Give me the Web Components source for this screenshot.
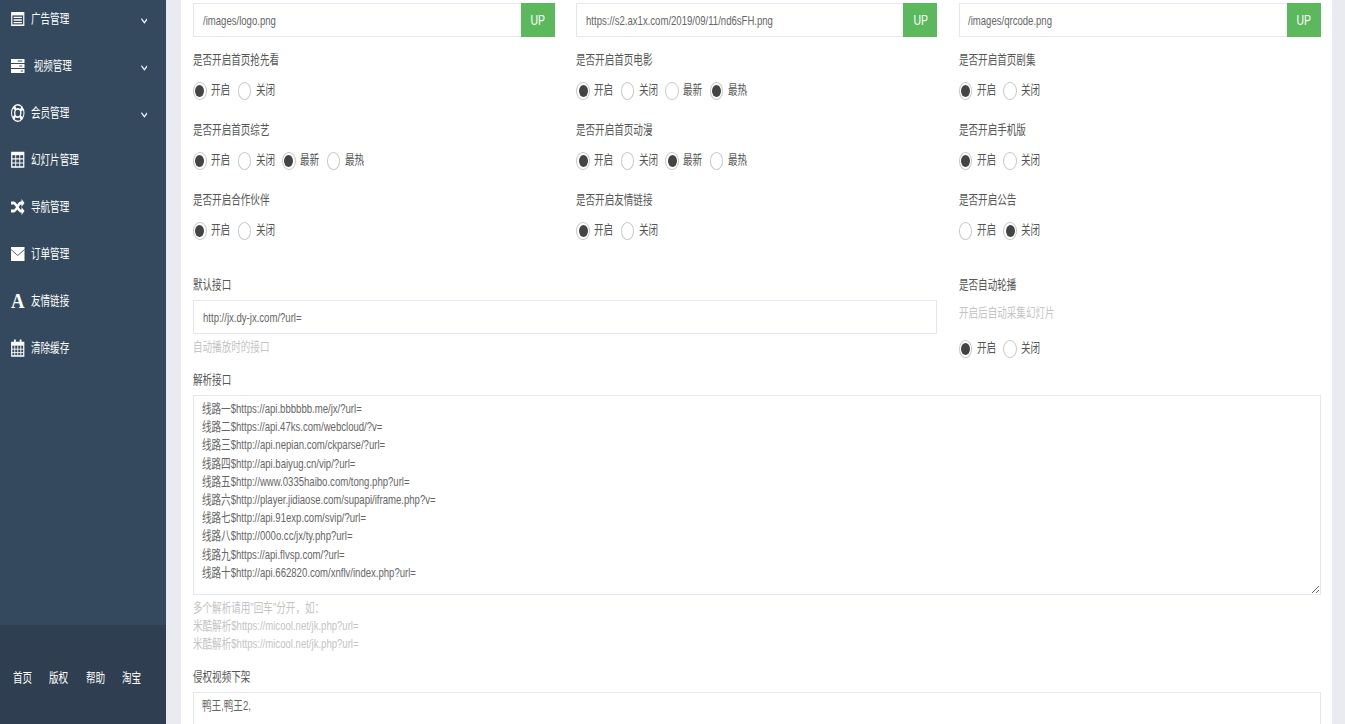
<!DOCTYPE html>
<html lang="zh">
<head>
<meta charset="utf-8">
<title>系统设置</title>
<style>
  html, body { margin: 0; height: 724px; overflow: hidden; background: #e9ebf0; }
</style>
</head>
<body>
<admin-shell>
  <side-nav slot="side">
    <nav-item icon="list" arrow>广告管理</nav-item>
    <nav-item icon="server" arrow>&nbsp;视频管理</nav-item>
    <nav-item icon="ring" arrow>会员管理</nav-item>
    <nav-item icon="table">幻灯片管理</nav-item>
    <nav-item icon="random">导航管理</nav-item>
    <nav-item icon="mail">订单管理</nav-item>
    <nav-item icon="font">友情链接</nav-item>
    <nav-item icon="calendar">清除缓存</nav-item>
    <foot-link slot="foot">首页</foot-link>
    <foot-link slot="foot">版权</foot-link>
    <foot-link slot="foot">帮助</foot-link>
    <foot-link slot="foot">淘宝</foot-link>
  </side-nav>

  <form-card>
    <upload-field>/images/logo.png</upload-field>
    <upload-field>https://s2.ax1x.com/2019/09/11/nd6sFH.png</upload-field>
    <upload-field>/images/qrcode.png</upload-field>

    <switch-field label="是否开启首页抢先看" options="开启,关闭" checked="0"></switch-field>
    <switch-field label="是否开启首页电影" options="开启,关闭,最新,最热" checked="0,3"></switch-field>
    <switch-field label="是否开启首页剧集" options="开启,关闭" checked="0"></switch-field>
    <switch-field label="是否开启首页综艺" options="开启,关闭,最新,最热" checked="0,2"></switch-field>
    <switch-field label="是否开启首页动漫" options="开启,关闭,最新,最热" checked="0,2"></switch-field>
    <switch-field label="是否开启手机版" options="开启,关闭" checked="0"></switch-field>
    <switch-field label="是否开启合作伙伴" options="开启,关闭" checked="0"></switch-field>
    <switch-field label="是否开启友情链接" options="开启,关闭" checked="0"></switch-field>
    <switch-field label="是否开启公告" options="开启,关闭" checked="1"></switch-field>

    <text-field slot="api" label="默认接口" help="自动播放时的接口">http://jx.dy-jx.com/?url=</text-field>
    <switch-field slot="auto" label="是否自动轮播" help="开启后自动采集幻灯片" options="开启,关闭" checked="0"></switch-field>

    <area-field slot="wide" label="解析接口" height="200" grip>线路一$https://api.bbbbbb.me/jx/?url=
线路二$https://api.47ks.com/webcloud/?v=
线路三$http://api.nepian.com/ckparse/?url=
线路四$http://api.baiyug.cn/vip/?url=
线路五$http://www.0335haibo.com/tong.php?url=
线路六$http://player.jidiaose.com/supapi/iframe.php?v=
线路七$http://api.91exp.com/svip/?url=
线路八$http://000o.cc/jx/ty.php?url=
线路九$https://api.flvsp.com/?url=
线路十$http://api.662820.com/xnflv/index.php?url=<span slot="help">多个解析请用"回车"分开，如：
米酷解析$https://micool.net/jk.php?url=
米酷解析$https://micool.net/jk.php?url=</span></area-field>

    <area-field slot="wide" label="侵权视频下架" height="100">鸭王,鸭王2,</area-field>
  </form-card>
</admin-shell>

<script>
// the reference has all its text narrowed to 3/4 width
const NARROW = `
  .t {
    display: block;
    width: max-content;
    white-space: pre;
    transform: scaleX(.75);
    transform-origin: 0 0;
  }
`

const ICONS = {
  list: '<rect x="1" y="2.8" width="16" height="12.4" fill="none" stroke="#fff" stroke-width="1.6"/><path d="M1 3h16v2.4H1z" fill="#fff"/><path d="M3.5 7.4h11M3.5 10h11M3.5 12.6h11" stroke="#fff" stroke-width="1.3"/>',
  server: '<path d="M0 2h18v4H0zM0 7h18v4H0zM0 12h18v4H0z" fill="#fff"/><path d="M9 3.4h6v1.2H9zM11 8.4h4v1.2h-4zM13 13.4h3v1.2h-3z" fill="#34495e"/>',
  ring: '<circle cx="9" cy="9" r="9" fill="#fff"/><circle cx="9" cy="9" r="6.3" fill="none" stroke="#34495e" stroke-width="2.6" stroke-dasharray="6.9 3" stroke-dashoffset="3.45"/><circle cx="9" cy="9" r="3.2" fill="#34495e"/>',
  table: '<path d="M1 1.5h16v14.5H1z" fill="none" stroke="#fff" stroke-width="1.6"/><path d="M1 2h16v2.2H1z" fill="#fff"/><path d="M6.3 3v13M11.7 3v13M1 7.8h16M1 12h16" stroke="#fff" stroke-width="1.2"/>',
  random: '<path d="M0 5h3.5c4 0 6 8 9.5 8h2M0 13h3.5c4 0 6-8 9.5-8h2" fill="none" stroke="#fff" stroke-width="3"/><path d="M14 1l4 4-4 4zM14 9l4 4-4 4z" fill="#fff"/>',
  mail: '<path d="M0 2h18v14H0z" fill="#fff"/><path d="M0 4.5l9 6 9-6" fill="none" stroke="#34495e" stroke-width="1"/>',
  calendar: '<path d="M1 3.5h16V17H1z" fill="none" stroke="#fff" stroke-width="1.6"/><path d="M1 3.5h16v3.2H1z" fill="#fff"/><path d="M4 0.5h2.4v4H4zM11.6 0.5H14v4h-2.4z" fill="#fff"/><path d="M5 7v10M9 7v10M13 7v10M1 10.2h16M1 13.6h16" stroke="#fff" stroke-width="1"/>'
}

const shellTemplate = document.createElement('template')
shellTemplate.innerHTML = `
  <style>
    :host {
      display: flex;
      height: 724px;
      overflow: hidden;
      font: 12.75px/18.2px "Liberation Sans", "Noto Sans CJK SC", sans-serif;
      color: #555;
    }
    main {
      flex: 1;
      min-width: 0;
      padding: 0 13px 0 15px;
    }
  </style>
  <slot name="side"></slot>
  <main><slot></slot></main>
`
customElements.define('admin-shell', class extends HTMLElement {
  constructor () {
    super()
    this.attachShadow({ mode: 'open' }).appendChild(shellTemplate.content.cloneNode(true))
  }
})

const sideTemplate = document.createElement('template')
sideTemplate.innerHTML = `
  <style>
    :host {
      display: flex;
      flex-direction: column;
      flex: none;
      width: 166px;
      height: 724px;
      background: #34495e;
      color: #fff;
    }
    nav {
      flex: 1;
      margin-top: -4.5px;
    }
    footer {
      display: flex;
      align-items: center;
      gap: 17.3px;
      height: 99px;
      padding: 8px 0 0 13px;
      box-sizing: border-box;
      background: #2f3f51;
    }
  </style>
  <nav><slot></slot></nav>
  <footer><slot name="foot"></slot></footer>
`
customElements.define('side-nav', class extends HTMLElement {
  constructor () {
    super()
    this.attachShadow({ mode: 'open' }).appendChild(sideTemplate.content.cloneNode(true))
  }
})

const footTemplate = document.createElement('template')
footTemplate.innerHTML = `
  <style>
    :host { display: block; width: 19px; }
    ${NARROW}
  </style>
  <span class="t"><slot></slot></span>
`
customElements.define('foot-link', class extends HTMLElement {
  constructor () {
    super()
    this.attachShadow({ mode: 'open' }).appendChild(footTemplate.content.cloneNode(true))
  }
})

const itemTemplate = document.createElement('template')
itemTemplate.innerHTML = `
  <style>
    :host {
      display: flex;
      align-items: center;
      height: 47px;
      padding: 0 18.7px 0 11px;
    }
    #icon {
      flex: none;
      width: 13.5px;
      height: 18px;
      margin-right: 6.5px;
    }
    #icon svg { display: block; }
    #letter {
      display: block;
      width: max-content;
      font: bold 22px/18px "Liberation Serif", serif;
      transform: scaleX(.85);
      transform-origin: 0 0;
    }
    #arrow { margin: 3px 0 0 auto; display: none; }
    :host([arrow]) #arrow { display: block; }
    ${NARROW}
  </style>
  <span id="icon"></span>
  <span class="t"><slot></slot></span>
  <svg id="arrow" width="6.75" height="6" viewBox="0 0 9 6" preserveAspectRatio="none">
    <path d="M.6.8l3.9 4 3.9-4" fill="none" stroke="#fff" stroke-width="1.4"/>
  </svg>
`
customElements.define('nav-item', class extends HTMLElement {
  constructor () {
    super()
    this.attachShadow({ mode: 'open' }).appendChild(itemTemplate.content.cloneNode(true))
  }

  connectedCallback () {
    const icon = this.getAttribute('icon')
    const box = this.shadowRoot.querySelector('#icon')
    if (icon === 'font') {
      box.innerHTML = '<span id="letter">A</span>'
    } else {
      box.innerHTML = `<svg width="13.5" height="18" viewBox="0 0 18 18" preserveAspectRatio="none">${ICONS[icon]}</svg>`
    }
  }
})

const cardTemplate = document.createElement('template')
cardTemplate.innerHTML = `
  <style>
    :host {
      display: block;
      background: #fff;
      padding: 3px 11px 0 12px;
      height: 721px;
      overflow: hidden;
    }
    .grid {
      display: grid;
      grid-template-columns: 362px 361px 362px;
      column-gap: 21.4px;
    }
    .api { grid-column: span 2; margin-top: 15px; height: 95px; }
    .auto { margin-top: 15px; height: 95px; }
    .wide { display: block; }
  </style>
  <div class="grid">
    <slot></slot>
    <div class="api"><slot name="api"></slot></div>
    <div class="auto"><slot name="auto"></slot></div>
  </div>
  <slot class="wide" name="wide"></slot>
`
customElements.define('form-card', class extends HTMLElement {
  constructor () {
    super()
    this.attachShadow({ mode: 'open' }).appendChild(cardTemplate.content.cloneNode(true))
  }
})

const uploadTemplate = document.createElement('template')
uploadTemplate.innerHTML = `
  <style>
    :host {
      display: flex;
      height: 34px;
      margin-bottom: 13px;
    }
    div {
      flex: 1;
      min-width: 0;
      padding: 0 8.5px;
      border: 1px solid #e2e7f2;
      border-right: 0;
      line-height: 33px;
      color: #666;
    }
    button {
      display: flex;
      justify-content: center;
      align-items: center;
      flex: none;
      width: 34px;
      padding: 0;
      border: 0;
      background: #5cb85c;
      color: #fff;
      font: 14px "Liberation Sans", sans-serif;
    }
    button span {
      display: block;
      transform: scaleX(.75);
    }
    ${NARROW}
  </style>
  <div><span class="t"><slot></slot></span></div>
  <button type="button"><span>UP</span></button>
`
customElements.define('upload-field', class extends HTMLElement {
  constructor () {
    super()
    this.attachShadow({ mode: 'open' }).appendChild(uploadTemplate.content.cloneNode(true))
  }
})

const switchTemplate = document.createElement('template')
switchTemplate.innerHTML = `
  <style>
    :host {
      display: block;
      height: 70px;
    }
    label { display: block; height: 20px; line-height: 20px; }
    #help {
      margin-top: 9px;
      margin-bottom: 6px;
      color: #c4c4c4;
    }
    #options {
      display: flex;
      align-items: center;
      height: 40px;
    }
    .opt {
      display: flex;
      align-items: center;
      margin-right: 7px;
    }
    .name { display: block; width: 19.5px; margin-left: 4.5px; }
    .dot {
      display: flex;
      align-items: center;
      justify-content: center;
      box-sizing: border-box;
      width: 13.5px;
      height: 18px;
      margin-top: 1px;
      border: 1px solid #c8c8c8;
      border-radius: 50%;
      background: #fff;
    }
    .dot.on::after {
      content: "";
      width: 9px;
      height: 12px;
      border-radius: 50%;
      background: #444;
    }
    ${NARROW}
  </style>
  <label><span class="t"></span></label>
  <div id="help" hidden><span class="t"></span></div>
  <div id="options"></div>
`
customElements.define('switch-field', class extends HTMLElement {
  constructor () {
    super()
    this.attachShadow({ mode: 'open' }).appendChild(switchTemplate.content.cloneNode(true))
  }

  connectedCallback () {
    const root = this.shadowRoot
    root.querySelector('label .t').textContent = this.getAttribute('label')
    const help = this.getAttribute('help')
    if (help) {
      const el = root.querySelector('#help')
      el.querySelector('.t').textContent = help
      el.hidden = false
    }
    const checked = (this.getAttribute('checked') || '').split(',')
    root.querySelector('#options').innerHTML = this.getAttribute('options').split(',').map((text, i) => `
      <span class="opt"><span class="dot ${checked.includes(String(i)) ? 'on' : ''}"></span><span class="name"><span class="t">${text}</span></span></span>
    `).join('')
  }
})

const textTemplate = document.createElement('template')
textTemplate.innerHTML = `
  <style>
    :host { display: block; }
    label { display: block; height: 20px; line-height: 20px; margin-bottom: 5px; }
    #box {
      height: 34px;
      box-sizing: border-box;
      padding: 0 8.5px;
      border: 1px solid #e2e7f2;
      line-height: 33px;
      color: #666;
    }
    #help {
      margin-top: 4px;
      color: #c4c4c4;
      line-height: 18px;
    }
    ${NARROW}
  </style>
  <label><span class="t"></span></label>
  <div id="box"><span class="t"><slot></slot></span></div>
  <div id="help"><span class="t"></span></div>
`
customElements.define('text-field', class extends HTMLElement {
  constructor () {
    super()
    this.attachShadow({ mode: 'open' }).appendChild(textTemplate.content.cloneNode(true))
  }

  connectedCallback () {
    this.shadowRoot.querySelector('label .t').textContent = this.getAttribute('label')
    this.shadowRoot.querySelector('#help .t').textContent = this.getAttribute('help')
  }
})

const areaTemplate = document.createElement('template')
areaTemplate.innerHTML = `
  <style>
    :host {
      display: block;
      margin-bottom: 14px;
    }
    label { display: block; height: 20px; line-height: 20px; margin-bottom: 5px; }
    #box {
      box-sizing: border-box;
      padding: 4px 8px;
      border: 1px solid #e2e7f2;
      line-height: 18.2px;
      color: #666;
      overflow: auto;
    }
    #help {
      margin-top: 4px;
      color: #c4c4c4;
      line-height: 18px;
    }
    ${NARROW}
  </style>
  <label><span class="t"></span></label>
  <div id="box"><span class="t"><slot></slot></span></div>
  <div id="help"><span class="t"><slot name="help"></slot></span></div>
`
customElements.define('area-field', class extends HTMLElement {
  constructor () {
    super()
    this.attachShadow({ mode: 'open' }).appendChild(areaTemplate.content.cloneNode(true))
  }

  connectedCallback () {
    const box = this.shadowRoot.querySelector('#box')
    this.shadowRoot.querySelector('label .t').textContent = this.getAttribute('label')
    box.style.height = this.getAttribute('height') + 'px'
    if (this.hasAttribute('grip')) box.style.resize = 'both'
  }
})
</script>
</body>
</html>
